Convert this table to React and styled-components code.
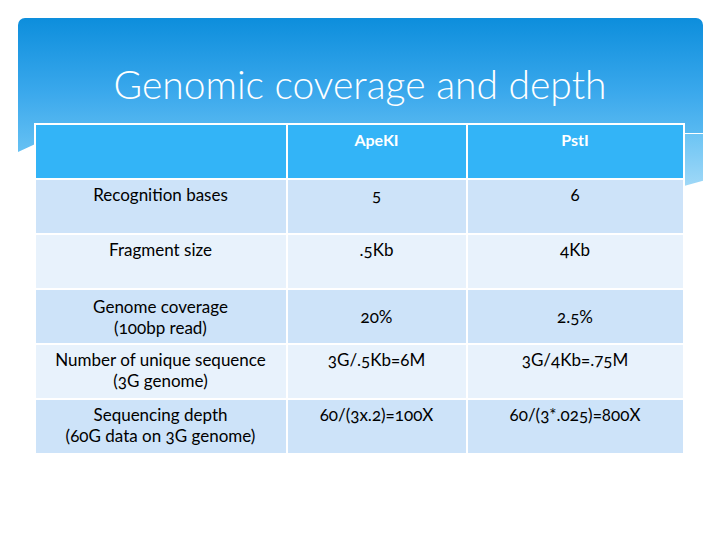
import React from "react";
import styled, { createGlobalStyle } from "styled-components";

const Global = createGlobalStyle`
  html, body { margin: 0; padding: 0; background: #fff; }
  body { font-family: "Lato", "Open Sans", sans-serif; }
`;

const Slide = styled.div`
  position: relative;
  width: 720px;
  height: 540px;
  background: #fff;
  overflow: hidden;
`;

const Banner = styled.div`
  position: absolute;
  left: 18px;
  top: 18px;
  width: 685px;
  height: 134px;
  border-radius: 7px 7px 0 0;
  background: linear-gradient(180deg, #0d8edc 0%, #3aa8ec 55%, #66c1f3 100%);
  clip-path: polygon(0 0, 100% 0, 100% 86%, 3% 93%, 0 100%);
`;

const Fold = styled.div`
  position: absolute;
  left: 684px;
  top: 133px;
  width: 19px;
  height: 52px;
  background: linear-gradient(180deg, #6cc4f4 0%, #9fd8f7 100%);
  clip-path: polygon(0 0, 100% 0, 100% 90%, 0 100%);
  border-top: 1px solid #ffffff;
`;

const Content = styled.div`
  position: relative;
  display: flex;
  flex-direction: column;
  align-items: center;
  padding-top: 61px;
`;

const Title = styled.h1`
  margin: 0;
  font-family: "Lato", "Open Sans", sans-serif;
  font-weight: 300;
  font-size: 39px;
  line-height: 46px;
  color: #ffffff;
`;

const Table = styled.div`
  margin-top: 16px;
  margin-left: -2px;
  display: grid;
  grid-template-columns: 250px 178px 215px;
  grid-auto-rows: 53px;
  gap: 2px;
  padding: 2px 0 0 2px;
  background: #fff;
  width: 649px;
`;

const Cell = styled.div`
  display: flex;
  flex-direction: column;
  align-items: center;
  justify-content: ${(p) => (p.$center ? "center" : "flex-start")};
  padding-top: ${(p) => (p.$center ? "0" : "4px")};
  background: ${(p) =>
    p.$head ? "#33b4f7" : p.$dark ? "#cde3f9" : "#e8f2fc"};
  color: ${(p) => (p.$head ? "#ffffff" : "#000")};
  font-weight: ${(p) => (p.$head ? 700 : 400)};
  font-size: ${(p) => (p.$head ? "16px" : "17px")};
  line-height: 21px;
  font-variant-numeric: oldstyle-nums;
  text-align: center;
  box-sizing: border-box;
  white-space: nowrap;
`;

const rows = [
  { label: ["Recognition bases"], a: "5", b: "6" },
  { label: ["Fragment size"], a: ".5Kb", b: "4Kb" },
  { label: ["Genome coverage", "(100bp read)"], a: "20%", b: "2.5%", center: true },
  { label: ["Number of unique sequence", "(3G genome)"], a: "3G/.5Kb=6M", b: "3G/4Kb=.75M" },
  { label: ["Sequencing depth", "(60G data on 3G genome)"], a: "60/(3x.2)=100X", b: "60/(3*.025)=800X" },
];

export default function App() {
  return (
    <>
      <Global />
      <Slide>
        <Banner />
        <Fold />
        <Content>
          <Title>Genomic coverage and depth</Title>
          <Table>
            <Cell $head />
            <Cell $head>ApeKI</Cell>
            <Cell $head>PstI</Cell>
            {rows.map((r, i) => {
              const dark = i % 2 === 0;
              return (
                <React.Fragment key={i}>
                  <Cell $dark={dark} $center={r.center}>
                    {r.label.map((l) => (
                      <span key={l}>{l}</span>
                    ))}
                  </Cell>
                  <Cell $dark={dark} $center={r.center}>{r.a}</Cell>
                  <Cell $dark={dark} $center={r.center}>{r.b}</Cell>
                </React.Fragment>
              );
            })}
          </Table>
        </Content>
      </Slide>
    </>
  );
}
